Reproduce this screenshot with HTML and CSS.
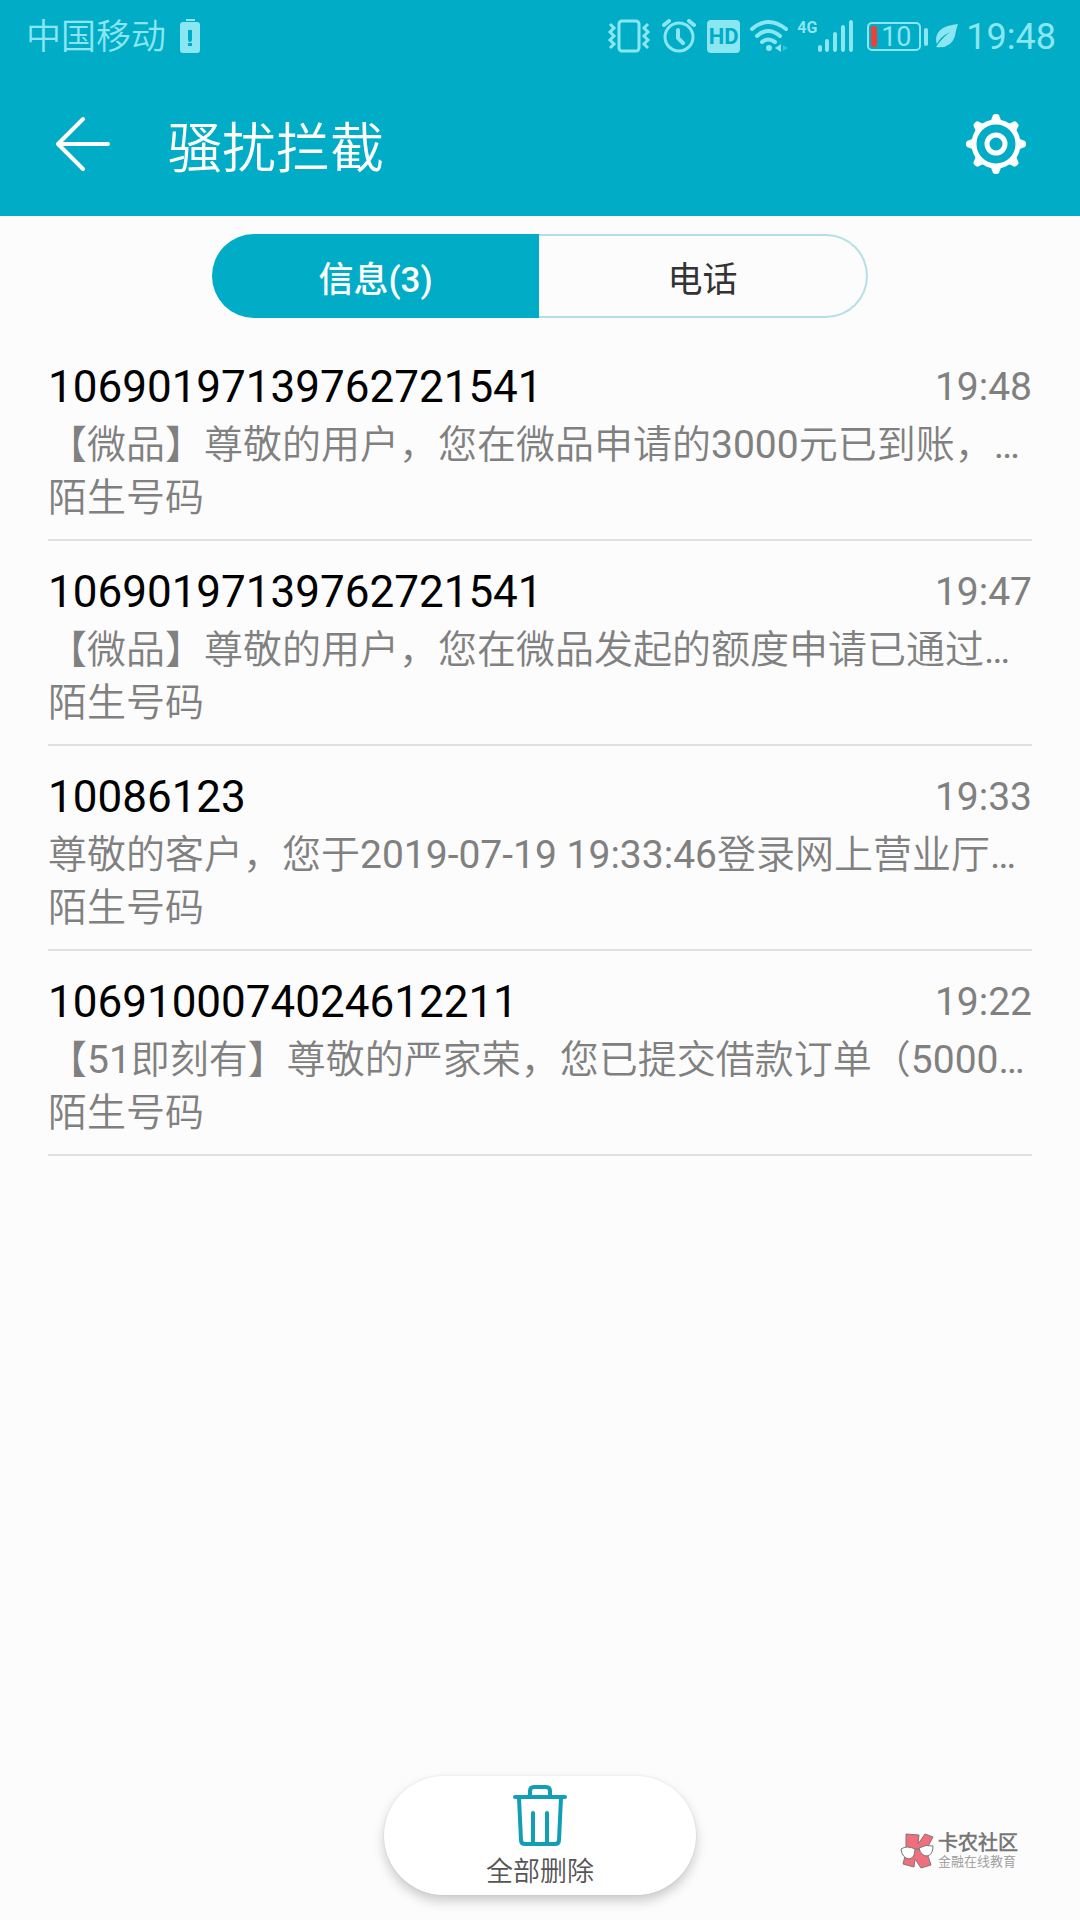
FILE: index.html
```html
<!DOCTYPE html>
<html lang="zh-CN">
<head>
    <meta charset="UTF-8">
    <meta name="viewport" content="width=device-width, initial-scale=1.0">
    <title>骚扰拦截</title>
    <link rel="stylesheet" href="styles.css">
</head>
<body>
    <header class="header">
        <!-- status bar -->
        <div class="status">
            <div class="status-left">
                <span class="carrier">中国移动</span>
                <svg width="20" height="34" viewBox="0 0 20 34" fill="currentColor">
                    <path d="M6 0h9v2H6z"/>
                    <path fill-rule="evenodd" d="M3 3h14q3 0 3 3v25q0 3-3 3H3q-3 0-3-3V6q0-3 3-3zM8 11v10l1 2h2l1-2V11zM8 24v3h4v-3z"/>
                </svg>
            </div>
            <div class="status-right">
                <svg class="vibrate" width="44" height="34" viewBox="0 0 44 34" fill="none" stroke="currentColor" stroke-width="3">
                    <rect x="12" y="2" width="20" height="30" rx="3"/>
                    <path d="M3 5l4 4-4 4 4 4-4 4 4 4-4 4M41 5l-4 4 4 4-4 4 4 4-4 4 4 4"/>
                </svg>
                <svg width="34" height="34" viewBox="0 0 34 34" fill="none" stroke="currentColor" stroke-width="3" stroke-linecap="round">
                    <circle cx="17" cy="18" r="14"/>
                    <path d="M16 11v8l5 5M2 6l5-4M32 6l-5-4" stroke-width="4"/>
                </svg>
                <span class="hd">HD</span>
                <svg width="40" height="34" viewBox="0 0 40 34" fill="none" stroke="currentColor" stroke-width="4" stroke-linecap="round">
                    <path d="M3 10q16-14 34 0M8 17q11-10 23 0M13 23q6-5 13 0"/>
                    <circle cx="20" cy="29" r="3" fill="currentColor" stroke="none"/>
                    <path d="M32 25v8l-6-4z" fill="currentColor" stroke="none"/>
                    <path d="M34 26l5 3-5 3z" fill="currentColor" stroke="none" opacity=".4"/>
                </svg>
                <div class="signal">
                    <span class="net">4G</span>
                    <svg width="36" height="34" viewBox="0 0 36 34" stroke="currentColor" stroke-width="4" stroke-linecap="round">
                        <path d="M3 28v3M10 22v9M18 15v16M26 8v23M34 3v28"/>
                    </svg>
                </div>
                <div class="battery"><span class="level"></span>10</div>
                <svg width="24" height="26" viewBox="0 0 24 26">
                    <path fill="currentColor" d="M24 1Q3 3 2 16q0 4 1 5Q6 14 16 9 7 16 2 24 17 26 21 13q1-7 3-12z"/>
                </svg>
                <span class="clock">19:48</span>
            </div>
        </div>

        <!-- title bar -->
        <div class="titlebar">
            <button class="icon-btn" type="button" aria-label="返回">
                <svg width="56" height="56" viewBox="0 0 56 56" fill="none" stroke="#fff" stroke-width="4" stroke-linecap="round" stroke-linejoin="round">
                    <path d="M54 28H4M29 3L4 28l25 25"/>
                </svg>
            </button>
            <h1>骚扰拦截</h1>
            <button class="icon-btn" type="button" aria-label="设置">
                <svg width="60" height="60" viewBox="0 0 60 60" fill="none" stroke="#fff">
                    <circle cx="30" cy="30" r="22" stroke-width="5"/>
                    <circle cx="30" cy="30" r="9" stroke-width="5"/>
                    <g fill="#fff" stroke="none">
                        <path id="tooth" d="M24 9l3-8q1-1 3-1t3 1l3 8z"/>
                        <use href="#tooth" transform="rotate(45 30 30)"/>
                        <use href="#tooth" transform="rotate(90 30 30)"/>
                        <use href="#tooth" transform="rotate(135 30 30)"/>
                        <use href="#tooth" transform="rotate(180 30 30)"/>
                        <use href="#tooth" transform="rotate(225 30 30)"/>
                        <use href="#tooth" transform="rotate(270 30 30)"/>
                        <use href="#tooth" transform="rotate(315 30 30)"/>
                    </g>
                </svg>
            </button>
        </div>
    </header>

    <main>
        <div class="tabs">
            <button class="tab active" type="button">信息(3)</button>
            <button class="tab" type="button">电话</button>
        </div>

        <ul class="list">
            <li class="item">
                <div class="row">
                    <h2>10690197139762721541</h2>
                    <time>19:48</time>
                </div>
                <p class="text">【微品】尊敬的用户，您在微品申请的3000元已到账，…</p>
                <p>陌生号码</p>
            </li>
            <li class="item">
                <div class="row">
                    <h2>10690197139762721541</h2>
                    <time>19:47</time>
                </div>
                <p class="text">【微品】尊敬的用户，您在微品发起的额度申请已通过…</p>
                <p>陌生号码</p>
            </li>
            <li class="item">
                <div class="row">
                    <h2>10086123</h2>
                    <time>19:33</time>
                </div>
                <p class="text">尊敬的客户，您于2019-07-19 19:33:46登录网上营业厅…</p>
                <p>陌生号码</p>
            </li>
            <li class="item">
                <div class="row">
                    <h2>1069100074024612211</h2>
                    <time>19:22</time>
                </div>
                <p class="text">【51即刻有】尊敬的严家荣，您已提交借款订单（5000…</p>
                <p>陌生号码</p>
            </li>
        </ul>
    </main>

    <footer>
        <button class="delete" type="button">
            <svg width="54" height="61" viewBox="0 0 54 61" fill="none" stroke="#129fb5" stroke-width="4" stroke-linecap="round" stroke-linejoin="round">
                <path d="M2 12h50M17 11V6q0-4 4-4h12q4 0 4 4v5M6 13l2 42q0 4 4 4h30q4 0 4-4l2-42M20 28v30M34 28v30"/>
            </svg>
            <span>全部删除</span>
        </button>

        <div class="brand">
            <svg width="34" height="36" viewBox="0 0 34 36">
                <path d="M6 1l13 1-1 9 7-10 8 3-7 13 5 15-10 3-6-9-1 8-11-3 3-12z" fill="#ef6f7c" stroke="#8a7378"/>
                <g fill="#fff" stroke="#777">
                    <path d="M1 16q6-4 14 0 0 9-6 10-7-1-8-10zM19 15q7-4 14-2 0 9-6 10-6 0-8-8z"/>
                    <path d="M15 17q2-2 4-1" fill="none"/>
                </g>
            </svg>
            <div>
                <strong>卡农社区</strong>
                <small>金融在线教育</small>
            </div>
        </div>
    </footer>
</body>
</html>
```
FILE: styles.css
```css
* {
    box-sizing: border-box;
    margin: 0;
    padding: 0;
}

body {
    display: flex;
    flex-direction: column;
    min-height: 100vh;
    font-family: Roboto, "Noto Sans CJK SC DemiLight", "Noto Sans CJK SC", sans-serif;
    background-color: #fcfcfc;
    color: #808080;
}

button {
    border: none;
    background: none;
    font-family: inherit;
    cursor: pointer;
}

svg {
    display: block;
    flex-shrink: 0;
}

.header {
    background-color: #00acc6;
    color: #fff;
}

/* status bar */
.status {
    display: flex;
    justify-content: space-between;
    align-items: center;
    height: 72px;
    padding: 0 24px 0 26px;
    color: #8ae6f1;
}

.status-left,
.status-right {
    display: flex;
    align-items: center;
}

.status-left {
    gap: 14px;
}

.status-right {
    gap: 8px;
}

.carrier {
    padding-top: 4px;
    font-size: 35px;
    font-weight: 350;
    line-height: 48px;
}

.vibrate {
    margin-right: 3px;
}

.hd {
    width: 33px;
    height: 33px;
    margin: 0 1px 0 3px;
    border-radius: 4px;
    background-color: #8ae6f1;
    color: #00acc6;
    font-size: 22px;
    font-weight: 700;
    line-height: 33px;
    text-align: center;
}

.signal {
    display: flex;
    align-items: flex-start;
}

.net {
    font-size: 16px;
    font-weight: 700;
    line-height: 18px;
}

.battery {
    position: relative;
    width: 54px;
    height: 29px;
    margin: 0 5px 0 6px;
    padding-left: 4px;
    border: 2px solid #8ae6f1;
    border-radius: 5px;
    font-size: 27px;
    line-height: 26px;
    text-align: center;
}

.battery::after {
    content: "";
    position: absolute;
    top: 4px;
    right: -9px;
    width: 4px;
    height: 18px;
    border-radius: 2px;
    background-color: #8ae6f1;
}

.level {
    position: absolute;
    top: 2px;
    left: 2px;
    width: 6px;
    height: 21px;
    border-radius: 2px;
    background-color: #ee4035;
}

.clock {
    padding-top: 2px;
    font-size: 36px;
}

/* title bar */
.titlebar {
    display: flex;
    align-items: center;
    height: 144px;
    padding: 0 54px;
}

.titlebar h1 {
    flex: 1;
    margin-left: 58px;
    font-size: 54px;
    font-weight: 350;
}

main {
    flex: 1;
    padding: 18px 48px;
}

.tabs {
    display: flex;
    max-width: 656px;
    height: 84px;
    margin: 0 auto 18px;
}

.tab {
    flex: 1;
    border: 2px solid #b5dfe6;
    border-left: none;
    border-radius: 0 42px 42px 0;
    font-family: Roboto, "Noto Sans CJK SC", sans-serif;
    font-size: 35px;
    color: #333;
}

.tab.active {
    border: none;
    border-radius: 42px 0 0 42px;
    background-color: #00acc6;
    color: #fff;
    font-weight: 500;
}

/* messages */
.list {
    list-style: none;
}

.item {
    height: 205px;
    padding-top: 23px;
    border-bottom: 2px solid #e0e0e0;
    font-size: 39px;
    font-weight: 400;
    line-height: 53px;
}

.row {
    display: flex;
    justify-content: space-between;
    align-items: center;
    height: 56px;
    margin-bottom: 4px;
}

.row h2 {
    font-size: 44px;
    font-weight: 400;
    color: #000;
}

.text {
    overflow: hidden;
    white-space: nowrap;
}

footer {
    position: relative;
    display: flex;
    justify-content: center;
    padding-bottom: 25px;
}

.delete {
    display: flex;
    flex-direction: column;
    align-items: center;
    width: 312px;
    height: 119px;
    padding-top: 9px;
    border-radius: 60px;
    background-color: #fff;
    box-shadow: 0 6px 12px rgba(0, 0, 0, 0.2), 0 0 2px rgba(0, 0, 0, 0.1);
    font-size: 27px;
    font-weight: 350;
    line-height: 52px;
    color: #555;
}

/* logo in the corner */
.brand {
    position: absolute;
    right: 62px;
    bottom: 50px;
    display: flex;
    align-items: center;
    gap: 4px;
}

.brand strong,
.brand small {
    display: block;
    white-space: nowrap;
}

.brand strong {
    font-size: 20px;
    font-weight: 900;
    line-height: 22px;
    color: #777;
}

.brand small {
    font-size: 13px;
    line-height: 16px;
    color: #999;
}
```
